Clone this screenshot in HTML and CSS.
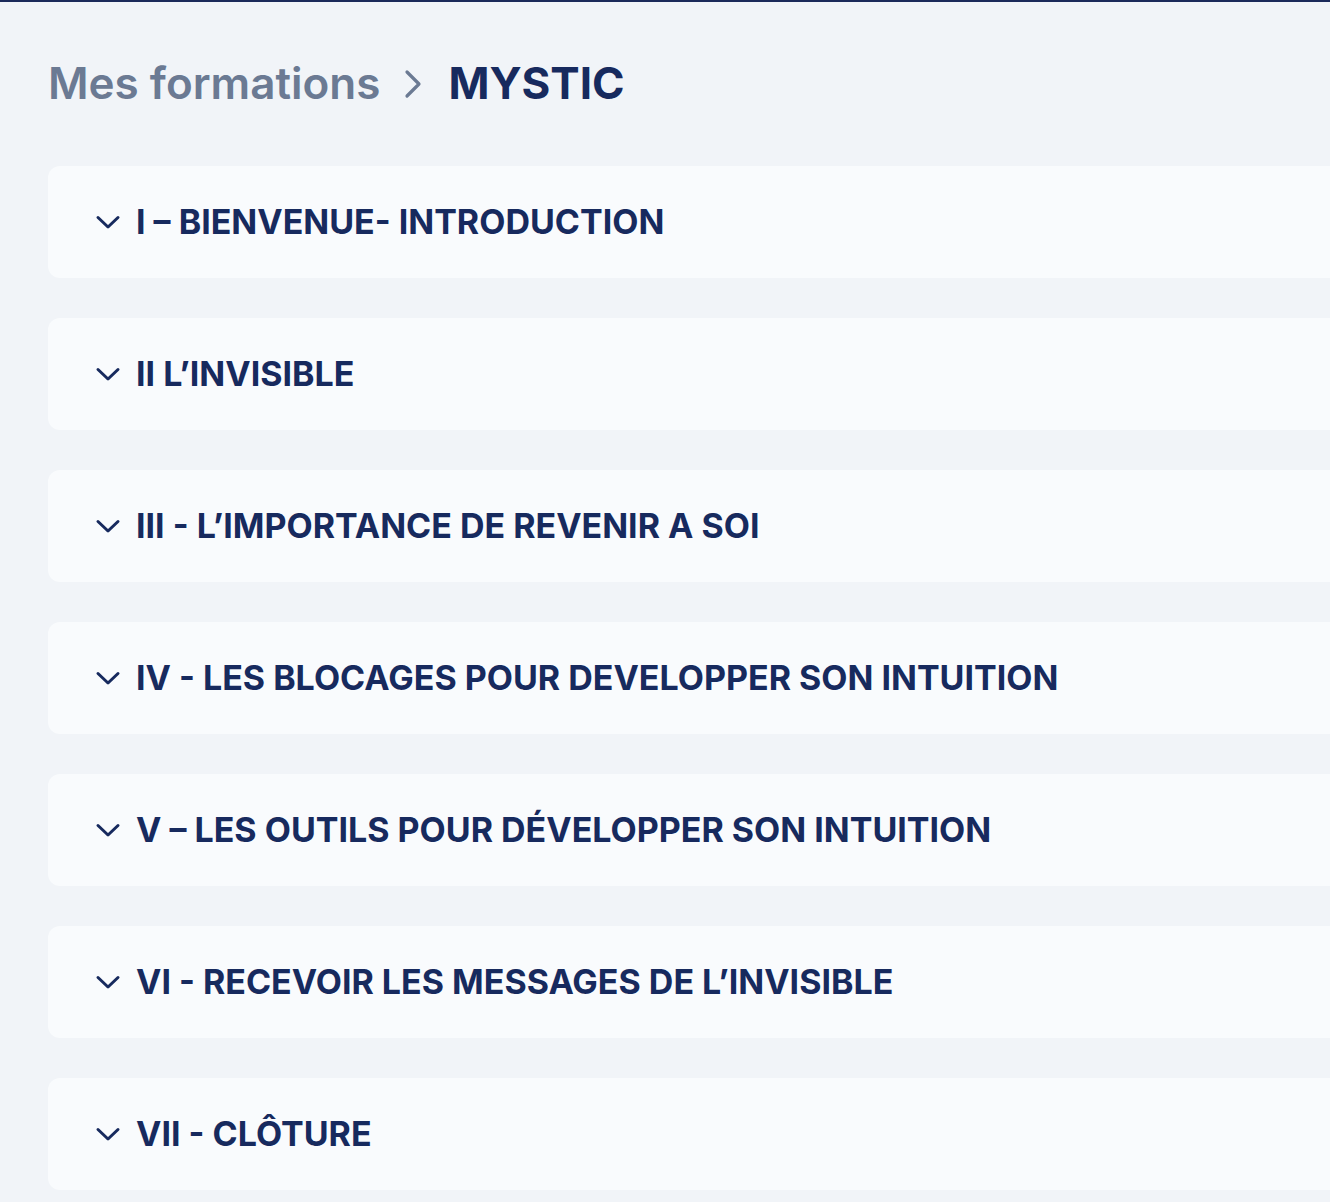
FILE: index.html
```html
<!DOCTYPE html>
<html lang="fr">
<head>
<meta charset="utf-8">
<title>MYSTIC</title>
<link rel="stylesheet" href="styles.css">
</head>
<body>
<div class="topbar"></div>
<main class="page">
  <nav class="breadcrumb">
    <span class="crumb-parent">Mes formations</span>
    <svg class="crumb-sep" width="18" height="30" viewBox="0 0 18 30" fill="none" stroke="currentColor" stroke-width="3.2" stroke-linecap="round" stroke-linejoin="round"><path d="M3 3l12 12-12 12"/></svg>
    <span class="crumb-current">MYSTIC</span>
  </nav>
  <section class="sections">
    <div class="card"><svg class="chev" viewBox="0 0 28 28" fill="none" stroke="currentColor" stroke-width="3" stroke-linecap="round" stroke-linejoin="round"><path d="M4 9.5l10 9.5 10-9.5"/></svg><span class="title">I – BIENVENUE- INTRODUCTION</span></div>
    <div class="card"><svg class="chev" viewBox="0 0 28 28" fill="none" stroke="currentColor" stroke-width="3" stroke-linecap="round" stroke-linejoin="round"><path d="M4 9.5l10 9.5 10-9.5"/></svg><span class="title">II L’INVISIBLE</span></div>
    <div class="card"><svg class="chev" viewBox="0 0 28 28" fill="none" stroke="currentColor" stroke-width="3" stroke-linecap="round" stroke-linejoin="round"><path d="M4 9.5l10 9.5 10-9.5"/></svg><span class="title">III - L’IMPORTANCE DE REVENIR A SOI</span></div>
    <div class="card"><svg class="chev" viewBox="0 0 28 28" fill="none" stroke="currentColor" stroke-width="3" stroke-linecap="round" stroke-linejoin="round"><path d="M4 9.5l10 9.5 10-9.5"/></svg><span class="title">IV - LES BLOCAGES POUR DEVELOPPER SON INTUITION</span></div>
    <div class="card"><svg class="chev" viewBox="0 0 28 28" fill="none" stroke="currentColor" stroke-width="3" stroke-linecap="round" stroke-linejoin="round"><path d="M4 9.5l10 9.5 10-9.5"/></svg><span class="title">V – LES OUTILS POUR DÉVELOPPER SON INTUITION</span></div>
    <div class="card"><svg class="chev" viewBox="0 0 28 28" fill="none" stroke="currentColor" stroke-width="3" stroke-linecap="round" stroke-linejoin="round"><path d="M4 9.5l10 9.5 10-9.5"/></svg><span class="title">VI - RECEVOIR LES MESSAGES DE L’INVISIBLE</span></div>
    <div class="card"><svg class="chev" viewBox="0 0 28 28" fill="none" stroke="currentColor" stroke-width="3" stroke-linecap="round" stroke-linejoin="round"><path d="M4 9.5l10 9.5 10-9.5"/></svg><span class="title">VII - CLÔTURE</span></div>
  </section>
</main>
</body>
</html>
```

FILE: styles.css
```css
html, body {
  margin: 0;
  padding: 0;
}
body {
  background: #f1f4f8;
  font-family: Inter, "Noto Sans", "Liberation Sans", sans-serif;
  color: #172a5e;
  overflow: hidden;
  height: 1202px;
}
.topbar {
  height: 2px;
  background: #1b2a5a;
}
.page {
  padding: 0 0 0 48px;
}
.breadcrumb {
  display: flex;
  align-items: center;
  height: 164px;
  box-sizing: border-box;
  padding-bottom: 2px;
}
.crumb-parent {
  font-size: 44px;
  font-weight: 600;
  color: #6b7a93;
}
.crumb-sep {
  color: #6b7a93;
  margin: 2px 26px 0 24px;
}
.crumb-current {
  font-size: 44px;
  font-weight: 700;
  color: #172a5e;
}
.sections {
  display: flex;
  flex-direction: column;
  gap: 40px;
  margin-right: -60px;
}
.card {
  height: 112px;
  box-sizing: border-box;
  padding-bottom: 1px;
  background: #f9fbfd;
  border-radius: 12px;
  display: flex;
  align-items: center;
  padding-left: 46px;
}
.chev {
  width: 28px;
  height: 28px;
  color: #172a5e;
  margin-right: 14px;
}
.title {
  font-size: 34px;
  font-weight: 700;
}
```
